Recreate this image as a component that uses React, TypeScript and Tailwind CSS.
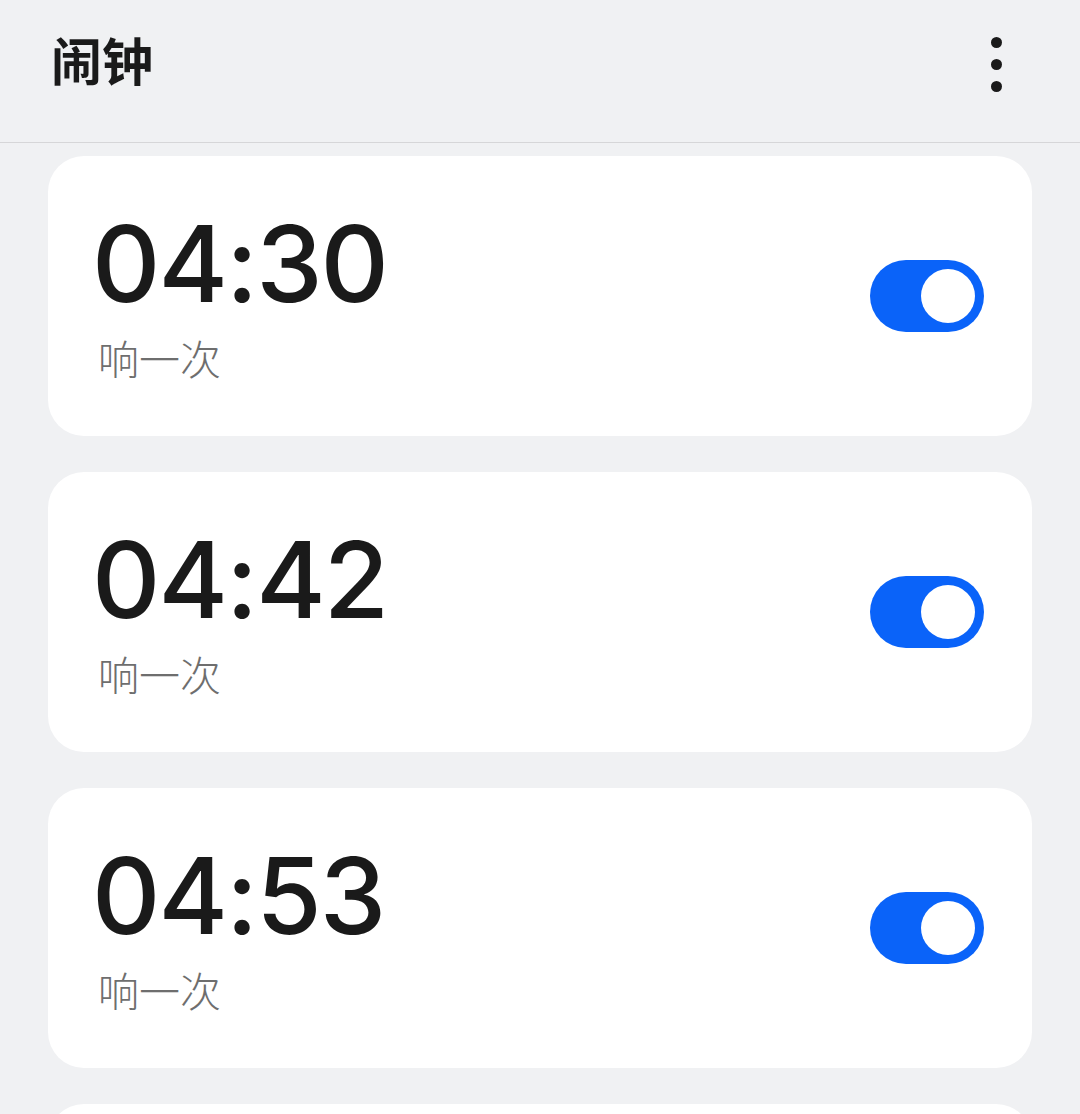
import React from "react";

const alarms = ["04:30", "04:42", "04:53"];

function Toggle() {
  return (
    <div className="w-[114px] h-[72px] rounded-full bg-[#0a63f9] flex items-center justify-end pr-[9px] shrink-0">
      <div className="w-[54px] h-[54px] rounded-full bg-white" />
    </div>
  );
}

export default function App() {
  return (
    <div className="w-[1080px] h-[1114px] overflow-hidden bg-[#f0f1f3]" style={{ fontFamily: '"Noto Sans CJK SC", sans-serif' }}>
      <div className="h-[143px] border-b-[1.5px] border-[#d6d6d8] flex items-center justify-between pl-[51px] pr-[78px]">
        <div className="text-[51px] font-bold text-[#1a1a1a] leading-none -mt-[23px]">闹钟</div>
        <div className="flex flex-col gap-[11px] -mt-[14px]">
          <div className="w-[11px] h-[11px] rounded-full bg-[#1a1a1a]" />
          <div className="w-[11px] h-[11px] rounded-full bg-[#1a1a1a]" />
          <div className="w-[11px] h-[11px] rounded-full bg-[#1a1a1a]" />
        </div>
      </div>
      <div className="flex flex-col gap-[36px] px-[48px] pt-[13px]">
        {alarms.map((t) => (
          <div key={t} className="h-[280px] shrink-0 bg-white rounded-[36px] flex items-center justify-between pl-[44px] pr-[48px]">
            <div className="flex flex-col -mt-[4px]">
              <div className="text-[106px] leading-none font-medium text-[#1a1a1a] tracking-[-2px]" style={{ fontFamily: 'Inter, "Noto Sans", sans-serif' }}>{t}</div>
              <div className="text-[41px] leading-none font-light text-[#6e6e6e] mt-[20px] pl-[6px]">响一次</div>
            </div>
            <Toggle />
          </div>
        ))}
        <div className="h-[280px] shrink-0 bg-white rounded-[36px]" />
      </div>
    </div>
  );
}
